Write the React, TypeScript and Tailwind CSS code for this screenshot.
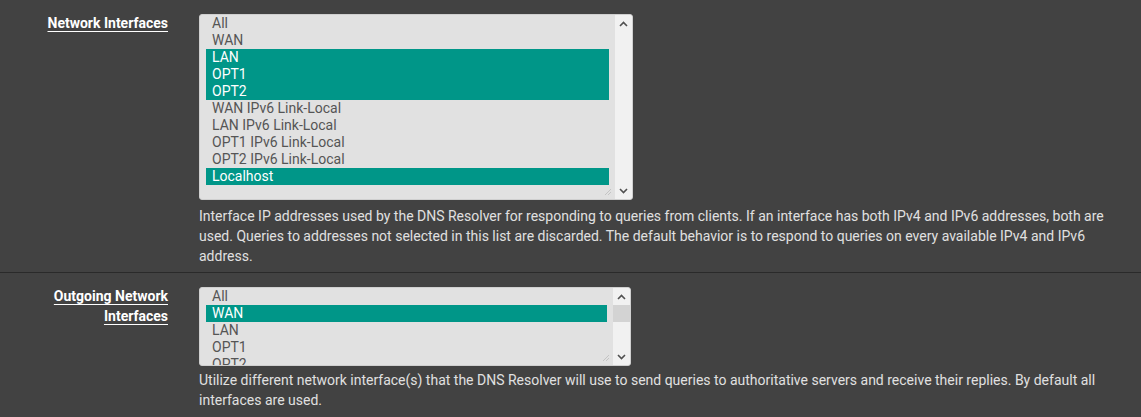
import React from "react";

type Item = { label: string; sel?: boolean };

const Chevron = ({ up }: { up?: boolean }) => (
  <svg width="9" height="6" viewBox="0 0 9 6" className="block">
    <path
      d={up ? "M1 5 L4.5 1.5 L8 5" : "M1 1 L4.5 4.5 L8 1"}
      fill="none"
      stroke="#505050"
      strokeWidth="1.6"
    />
  </svg>
);

const Grip = () => (
  <svg width="9" height="9" viewBox="0 0 9 9" className="block">
    <path d="M8 2 L2 8 M8 5 L5 8" stroke="#c4c4c4" strokeWidth="1" />
  </svg>
);

const ListBox = ({
  items,
  boxClass,
  thumb,
}: {
  items: Item[];
  boxClass: string;
  thumb?: boolean;
}) => (
  <div
    className={`flex border border-[#cfcfcf] rounded-[3px] bg-[#e1e1e1] overflow-hidden mt-[1px] ${boxClass}`}
  >
    <div className="relative flex-1 px-[6px] overflow-hidden">
      {items.map((it) => (
        <div
          key={it.label}
          className={`h-[17px] leading-[17px] pl-[6px] text-[14px] whitespace-nowrap ${
            it.sel ? "bg-[#009688] text-white" : "text-[#555555]"
          }`}
        >
          {it.label}
        </div>
      ))}
      <div className="absolute right-[3px] bottom-[3px]">
        <Grip />
      </div>
    </div>
    <div className="w-[17px] bg-[#f1f1f1] flex flex-col">
      <div className="h-[17px] flex items-center justify-center">
        <Chevron up />
      </div>
      {thumb ? <div className="h-[17px] bg-[#d3d3d3]" /> : null}
      <div className="flex-1" />
      <div className="h-[17px] flex items-center justify-center">
        <Chevron />
      </div>
    </div>
  </div>
);

const Label = ({ children }: { children: React.ReactNode }) => (
  <div className="w-[168px] shrink-0 pl-[20px] text-right text-[14px] leading-[20px] font-bold text-white">
    <span className="underline decoration-1 underline-offset-[3px]">{children}</span>
  </div>
);

export default function App() {
  const list1: Item[] = [
    { label: "All" },
    { label: "WAN" },
    { label: "LAN", sel: true },
    { label: "OPT1", sel: true },
    { label: "OPT2", sel: true },
    { label: "WAN IPv6 Link-Local" },
    { label: "LAN IPv6 Link-Local" },
    { label: "OPT1 IPv6 Link-Local" },
    { label: "OPT2 IPv6 Link-Local" },
    { label: "Localhost", sel: true },
  ];
  const list2: Item[] = [
    { label: "All" },
    { label: "WAN", sel: true },
    { label: "LAN" },
    { label: "OPT1" },
    { label: "OPT2" },
    { label: "WAN IPv6 Link-Local" },
  ];
  return (
    <div className="w-full min-h-[417px] bg-[#424242] font-['Roboto','Liberation_Sans',sans-serif]">
      <div className="flex pt-[13px] pb-[6px] border-b border-[#2a2a2a]">
        <Label>Network Interfaces</Label>
        <div className="ml-[31px] w-[927px]">
          <ListBox items={list1} boxClass="w-[434px] h-[186px]" />
          <p className="mt-[6px] text-[14px] leading-[20px] text-[#e0e0e0]">
            Interface IP addresses used by the DNS Resolver for responding to queries from clients. If an
            interface has both IPv4 and IPv6 addresses, both are used. Queries to addresses not selected in
            this list are discarded. The default behavior is to respond to queries on every available IPv4
            and IPv6 address.
          </p>
        </div>
      </div>
      <div className="flex pt-[13px] pb-[10px]">
        <Label>Outgoing Network Interfaces</Label>
        <div className="ml-[31px] w-[927px]">
          <ListBox items={list2} boxClass="w-[432px] h-[79px]" thumb />
          <p className="mt-[4px] text-[14px] leading-[20px] text-[#e0e0e0]">
            Utilize different network interface(s) that the DNS Resolver will use to send queries to
            authoritative servers and receive their replies. By default all interfaces are used.
          </p>
        </div>
      </div>
    </div>
  );
}
